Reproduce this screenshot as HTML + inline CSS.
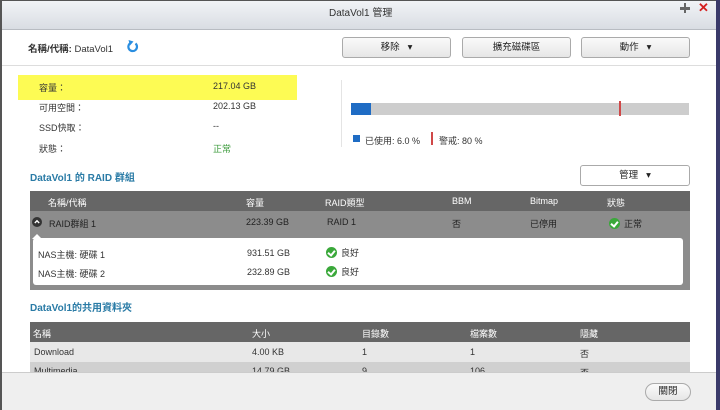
<!DOCTYPE html>
<html><head><meta charset="utf-8"><style>
*{margin:0;padding:0;box-sizing:border-box}
body{width:720px;height:410px;overflow:hidden;background:#fff;font-family:"Liberation Sans","Noto Sans CJK TC",sans-serif;font-size:9px;color:#333;position:relative}
.a{position:absolute;white-space:nowrap}
.btn{position:absolute;border:1px solid #aaa;border-radius:3px;background:linear-gradient(#fafafa,#e6e6e6);text-align:center;font-size:9.5px;color:#222;line-height:19px}
.h{background:#666;color:#fff}
.sec{color:#2a7ba6;font-weight:bold;font-size:10px}
.ck{display:inline-block;width:11px;height:11px;border-radius:50%;background:#3aa83a;position:relative;vertical-align:-2px;margin-right:4px}
.ck:after{content:"";position:absolute;left:3px;top:1.5px;width:3px;height:5px;border:solid #fff;border-width:0 2px 2px 0;transform:rotate(40deg)}
</style></head><body>
<div class="a" style="left:0;top:0;width:720px;height:30px;background:linear-gradient(#f2f4f7,#d9dde3);border-bottom:1px solid #b8bcc2"></div>
<div class="a" style="left:0;top:0;width:2px;height:410px;background:#555"></div>
<div class="a" style="left:0;top:0;width:720px;height:1px;background:#555"></div>
<div class="a" style="left:716px;top:0;width:4px;height:410px;background:#3a3a6a"></div>
<div class="a" style="left:329px;top:4px;font-size:10px;color:#333">DataVol1 管理</div>
<div class="a" style="left:680px;top:3px;width:10px;height:2.5px;background:#666;top:7px"></div>
<div class="a" style="left:683.75px;top:3px;width:2.5px;height:10px;background:#666"></div>
<div class="a" style="left:698px;top:0px;font-size:13px;font-weight:bold;color:#d42020">✕</div>
<div class="a" style="left:28px;top:41px;font-size:9.5px"><b style="font-weight:bold">名稱/代稱:</b> DataVol1</div>
<svg class="a" style="left:126px;top:39px" width="13" height="14" viewBox="0 0 13 14"><path d="M5 3.8A4.3 4.3 0 1 0 9.5 4.5" fill="none" stroke="#2a8ee0" stroke-width="2.2"/><path d="M2.5 1L7.5 2.5 4 6.5z" fill="#2a8ee0"/></svg>
<div class="btn" style="left:342px;top:37px;width:109px;height:21px">移除 &nbsp; ▾</div>
<div class="btn" style="left:462px;top:37px;width:109px;height:21px">擴充磁碟區</div>
<div class="btn" style="left:581px;top:37px;width:109px;height:21px">動作 &nbsp; ▾</div>
<div class="a" style="left:2px;top:65px;width:714px;height:1px;background:#ddd"></div>
<div class="a" style="left:18px;top:75px;width:279px;height:25px;background:#fdfb54"></div>
<div class="a" style="left:39px;top:81px">容量：</div><div class="a" style="left:213px;top:81px">217.04 GB</div>
<div class="a" style="left:39px;top:101px">可用空間：</div><div class="a" style="left:213px;top:101px">202.13 GB</div>
<div class="a" style="left:39px;top:121px">SSD快取：</div><div class="a" style="left:213px;top:121px">--</div>
<div class="a" style="left:39px;top:142px">狀態：</div><div class="a" style="left:213px;top:142px;color:#3a9a3a">正常</div>
<div class="a" style="left:341px;top:80px;width:1px;height:67px;background:#e4e4e4"></div>
<div class="a" style="left:351px;top:103px;width:338px;height:12px;background:#cdcdcd"></div>
<div class="a" style="left:351px;top:103px;width:20px;height:12px;background:#1f6cc4"></div>
<div class="a" style="left:619px;top:101px;width:2px;height:15px;background:#d04848"></div>
<div class="a" style="left:353px;top:135px;width:7px;height:7px;background:#1f6cc4"></div>
<div class="a" style="left:365px;top:134px">已使用: 6.0 %</div>
<div class="a" style="left:431px;top:132px;width:2px;height:13px;background:#d04848"></div>
<div class="a" style="left:439px;top:134px">警戒: 80 %</div>
<div class="a sec" style="left:30px;top:169px">DataVol1 的 RAID 群組</div>
<div class="btn" style="left:580px;top:165px;width:110px;height:21px;background:#fff">管理 &nbsp; ▾</div>
<div class="a h" style="left:30px;top:191px;width:660px;height:20px"></div>
<div class="a" style="left:30px;top:211px;width:660px;height:79px;background:#8c8c8c"></div>
<div class="a" style="left:33px;top:238px;width:650px;height:47px;background:#fff;border-radius:3px"></div>
<div class="a" style="left:32px;top:229px;width:0;height:0;border:5px solid transparent;border-bottom-color:#fff"></div>
<div style="color:#fff">
<div class="a" style="left:48px;top:196px">名稱/代稱</div><div class="a" style="left:246px;top:196px">容量</div><div class="a" style="left:325px;top:196px">RAID類型</div><div class="a" style="left:452px;top:196px">BBM</div><div class="a" style="left:530px;top:196px">Bitmap</div><div class="a" style="left:607px;top:196px">狀態</div>
</div>
<svg class="a" style="left:32px;top:217px" width="10" height="10" viewBox="0 0 10 10"><circle cx="5" cy="5" r="5" fill="#333"/><path d="M2.8 6L5 3.8 7.2 6" fill="none" stroke="#fff" stroke-width="1.4"/></svg>
<div class="a" style="left:49px;top:217px;color:#222">RAID群組 1</div>
<div class="a" style="left:246px;top:217px;color:#222">223.39 GB</div>
<div class="a" style="left:327px;top:217px;color:#222">RAID 1</div>
<div class="a" style="left:452px;top:217px;color:#222">否</div>
<div class="a" style="left:530px;top:217px;color:#222">已停用</div>
<div class="a" style="left:609px;top:217px;color:#222"><span class="ck"></span>正常</div>
<div class="a" style="left:38px;top:248px">NAS主機: 硬碟 1</div><div class="a" style="left:247px;top:248px">931.51 GB</div><div class="a" style="left:326px;top:246px"><span class="ck"></span>良好</div>
<div class="a" style="left:38px;top:267px">NAS主機: 硬碟 2</div><div class="a" style="left:247px;top:267px">232.89 GB</div><div class="a" style="left:326px;top:265px"><span class="ck"></span>良好</div>
<div class="a sec" style="left:30px;top:299px">DataVol1的共用資料夾</div>
<div class="a h" style="left:30px;top:322px;width:660px;height:20px"></div>
<div class="a" style="left:30px;top:342px;width:660px;height:20px;background:#e8e8e8"></div>
<div class="a" style="left:30px;top:362px;width:660px;height:12px;background:#d0d0d0"></div>
<div style="color:#fff">
<div class="a" style="left:33px;top:327px">名稱</div><div class="a" style="left:252px;top:327px">大小</div><div class="a" style="left:362px;top:327px">目錄數</div><div class="a" style="left:470px;top:327px">檔案數</div><div class="a" style="left:580px;top:327px">隱藏</div>
</div>
<div class="a" style="left:34px;top:347px">Download</div><div class="a" style="left:252px;top:347px">4.00 KB</div><div class="a" style="left:362px;top:347px">1</div><div class="a" style="left:470px;top:347px">1</div><div class="a" style="left:580px;top:347px">否</div>
<div class="a" style="left:34px;top:366px">Multimedia</div><div class="a" style="left:252px;top:366px">14.79 GB</div><div class="a" style="left:362px;top:366px">9</div><div class="a" style="left:470px;top:366px">106</div><div class="a" style="left:580px;top:366px">否</div>
<div class="a" style="left:2px;top:372px;width:714px;height:38px;background:#efefef;border-top:1px solid #ccc"></div>
<div class="btn" style="left:645px;top:383px;width:46px;height:18px;border-radius:9px;line-height:16px">關閉</div>
</body></html>
